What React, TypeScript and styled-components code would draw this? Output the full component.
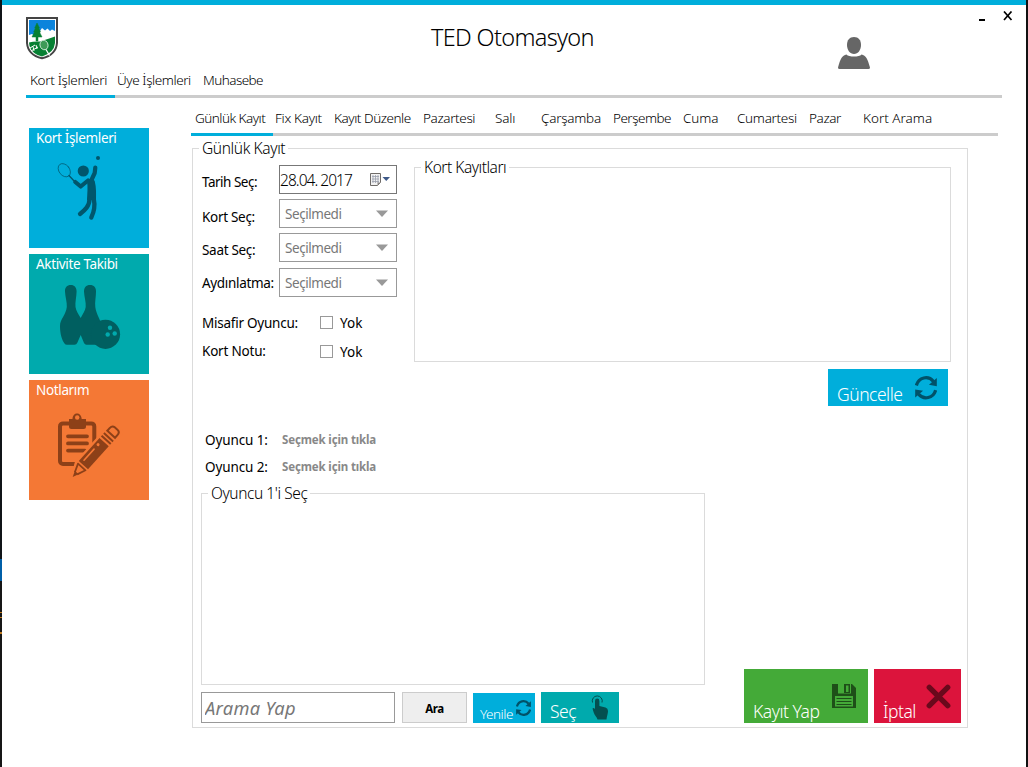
import React from "react";
import styled, { createGlobalStyle } from "styled-components";

const blue = "#00aedb";
const teal = "#00aaad";
const line = "#dbdbdb";

const GlobalStyle = createGlobalStyle`
  * { box-sizing: border-box; }
  body {
    margin: 0;
    overflow: hidden;
    background: #fff;
    color: #000;
    font-family: "Noto Sans", "Open Sans", sans-serif;
    font-size: 13.5px;
    line-height: 20px;
  }
  button, input { font: inherit; color: inherit; }
`;

const Desktop = styled.div`
  height: 767px;
  padding: 0 2px;
  background:
    linear-gradient(
      #101418 0 559px, #005fa8 559px 581px, #161616 581px 612px, #c07a20 612px 613px,
      #161616 613px 617px, #c07a20 617px 618px, #161616 618px 632px, #c07a20 632px 634px, #161616 634px
    ) left / 2px 100% no-repeat,
    #111;
`;

const Window = styled.div`
  display: flex;
  flex-direction: column;
  height: 100%;
  padding: 0 24px;
  border-top: 5px solid ${blue};
  background: #fff;
`;

const Header = styled.header`
  display: flex;
  height: 65px;
  margin-right: -11px;
`;

const Brand = styled.div`
  width: 405px;
  padding-top: 12px;
`;

const Title = styled.h1`
  width: 407px;
  margin: 0;
  padding-top: 17px;
  font-size: 23.5px;
  font-weight: 300;
  line-height: 31px;
  letter-spacing: -0.68px;
  white-space: nowrap;
`;

const Account = styled.div`
  flex: 1;
  padding-top: 32px;
`;

const WindowControls = styled.div`
  display: flex;
  align-items: flex-start;
  padding-top: 6px;
`;

const TabBar = styled.nav<{ $height: number }>`
  display: flex;
  align-items: stretch;
  height: ${(p) => p.$height}px;
  flex: none;
  border-bottom: 3px solid #ccc;
`;

const Tab = styled.a<{ $width: number; $space: number; $active?: boolean }>`
  flex: 0 0 ${(p) => p.$width + (p.$active ? 2 : 0)}px;
  padding-left: 4px;
  margin-right: ${(p) => (p.$active ? -2 : 0)}px;
  margin-bottom: -3px;
  border-bottom: 3px solid ${(p) => (p.$active ? blue : "transparent")};
  font-weight: 300;
  letter-spacing: ${(p) => p.$space}px;
  white-space: nowrap;
`;

const Body = styled.div`
  display: flex;
  flex: 1;
`;

const Sidebar = styled.aside`
  display: flex;
  flex-direction: column;
  gap: 6px;
  width: 165px;
  padding: 30px 0 0 3px;
`;

const Tile = styled.button<{ $color: string }>`
  display: grid;
  width: 120px;
  height: 120px;
  padding: 0;
  border: 0;
  background: ${(p) => p.$color};
  color: #fff;
  text-align: left;

  > * { grid-area: 1 / 1; }
`;

const TileLabel = styled.span`
  padding-left: 7px;
  letter-spacing: -0.35px;
`;

const Content = styled.main`
  width: 807px;
  padding-top: 10px;
`;

const Group = styled.section<{ $width: number; $height: number }>`
  position: relative;
  width: ${(p) => p.$width}px;
  height: ${(p) => p.$height}px;
  border: 1px solid ${line};
`;

const DayGroup = styled(Group)`
  margin: 12px 0 0 1px;
  padding: 16px 6px 4px 8px;
  display: flex;
  flex-direction: column;
`;

const Legend = styled.h2<{ $space: number }>`
  position: absolute;
  top: -12px;
  left: 6px;
  margin: 0;
  padding: 0 3px;
  background: #fff;
  font-size: 15.5px;
  font-weight: 300;
  line-height: 22px;
  letter-spacing: ${(p) => p.$space}px;
  white-space: nowrap;
`;

const Upper = styled.div`
  display: flex;
  height: 262px;
`;

const Form = styled.div`
  width: 213px;
  padding-left: 1px;
`;

const Field = styled.div<{ $height: number }>`
  display: flex;
  height: ${(p) => p.$height}px;
`;

const FieldLabel = styled.label<{ $drop: number; $space: number; $width?: number }>`
  width: ${(p) => p.$width ?? 77}px;
  padding-top: ${(p) => p.$drop}px;
  letter-spacing: ${(p) => p.$space}px;
  white-space: nowrap;
`;

const DateBox = styled.div`
  display: flex;
  align-items: center;
  width: 118px;
  height: 29px;
  padding-right: 5px;
  border: 1px solid #777;
  font-size: 15.5px;
  font-weight: 300;
  letter-spacing: -0.95px;
  line-height: 25px;

  > span { padding-top: 2px; }
  > svg { margin-left: auto; }
`;

const Year = styled.span`
  margin-left: 3px;
`;

const SelectBox = styled.div`
  display: flex;
  align-items: center;
  justify-content: space-between;
  width: 118px;
  height: 29px;
  padding: 0 8px 0 5px;
  border: 1px solid #999;
  color: #777;
  letter-spacing: -0.45px;
`;

const Options = styled.div`
  padding-top: 11px;
`;

const CheckLabel = styled.label<{ $drop: number }>`
  display: flex;
  align-items: center;
  gap: 7px;
  height: 20px;
  margin-top: ${(p) => p.$drop}px;
`;

const CheckBox = styled.span`
  width: 13px;
  height: 13px;
  margin-top: -1px;
  border: 1px solid #999;
`;

const Records = styled.div`
  display: flex;
  flex-direction: column;
  align-items: flex-end;
  gap: 7px;
  padding-top: 2px;
`;

const UpdateRow = styled.div`
  padding-right: 3px;
`;

const ActionTile = styled.button<{ $width: number; $height: number; $color: string; $pad: string }>`
  display: flex;
  justify-content: space-between;
  width: ${(p) => p.$width}px;
  height: ${(p) => p.$height}px;
  padding: ${(p) => p.$pad};
  border: 0;
  background: ${(p) => p.$color};
`;

const ActionText = styled.span<{ $small?: boolean }>`
  align-self: flex-end;
  color: #fff;
  font-size: ${(p) => (p.$small ? 13.5 : 17.5)}px;
  font-weight: 300;
  line-height: ${(p) => (p.$small ? 18 : 24)}px;
  letter-spacing: -0.48px;
  white-space: nowrap;
`;

const Players = styled.div`
  padding-left: 4px;
  line-height: 27px;
`;

const PlayerRow = styled.div`
  display: flex;
  height: 27px;
`;

const PlayerName = styled.span`
  width: 77px;
  letter-spacing: -0.1px;
`;

const PickLink = styled.a`
  color: #888;
  font-size: 11.5px;
  font-weight: 700;
  line-height: 25px;
  letter-spacing: -0.14px;
`;

const Lower = styled.div`
  display: flex;
  justify-content: space-between;
  align-items: flex-end;
  flex: 1;
`;

const SearchRow = styled.div`
  display: flex;
  align-items: flex-end;
  height: 31px;
  margin-top: 7px;
`;

const SearchInput = styled.input`
  width: 194px;
  height: 31px;
  margin-right: 7px;
  padding: 0 3px;
  border: 1px solid #999;
  outline: 0;
  font-size: 18.3px;
  font-style: italic;
  letter-spacing: 0.3px;

  &::placeholder { color: #777; opacity: 1; }
`;

const SearchButton = styled.button`
  width: 65px;
  height: 31px;
  margin-right: 6px;
  padding: 2px 0 0;
  border: 1px solid #ccc;
  background: #eee;
  font-size: 11.5px;
  font-weight: 700;
  letter-spacing: -0.4px;
`;

const PickSlot = styled.div`
  height: 31px;
  margin-left: 6px;
`;

const SubmitRow = styled.div`
  display: flex;
  gap: 6px;
`;

const Logo = () => (
  <svg width="32" height="43" viewBox="0 0 32 43" display="block">
    <path d="M1 1H31V26Q30 38 16 41.3Q2 38 1 26Z" fill="#fff" stroke="#444" strokeWidth="2" />
    <path d="M3 3H29V14L26 12.500L24 14L21.500 11.500L19 13.500L16 11L14 14V19H9L6 17L3 18Z" fill="#0b84dc" />
    <path d="M3 25.500Q8 24 14 24.500Q22 22 29 19.500V26Q28 36 16 39.500Q6 37 3.500 29Z" fill="#078033" />
    <path d="M11 6L13.500 11H12.700L14.500 15H13.500L16 20H12V24H10V20H6L8.500 15H7.700L9.500 11H8.700Z" fill="#078033" stroke="#078033" strokeWidth=".5" />
    <ellipse cx="18" cy="28" rx="4" ry="4.800" transform="rotate(-15 18 28)" fill="#3d9a57" stroke="#e4f2e8" strokeWidth=".8" />
    <path d="M20 32.500L23.500 38.500" stroke="#fff" strokeWidth="1.300" />
    <path d="M4 31L9 28M5 34L12 30M8 34L7 29.500M11 32L10 28" stroke="#fff" strokeWidth="1" />
  </svg>
);

const UserIcon = () => (
  <svg width="32" height="32" viewBox="0 0 32 32" fill="#666" display="block">
    <path d="M16 0C20.500 0 23 3.200 23 8C23 13 20 17 16 17S9 13 9 8C9 3.200 11.500 0 16 0Z" />
    <path d="M8.500 17.500C10.500 20.300 21.500 20.300 23.500 17.500C28 18.500 29.500 21.500 32 30.500Q32 32 30.500 32H1.500Q0 32 0 30.500C2.500 21.500 4 18.500 8.500 17.500Z" />
  </svg>
);

const ControlIcons = () => (
  <svg width="34" height="10" viewBox="0 0 34 10" fill="none" stroke="#000">
    <path d="M0 9H6" strokeWidth="2" />
    <path d="M25 .5L32.500 9M32.500 .5L25 9" strokeWidth="1.700" />
  </svg>
);

const TennisIcon = () => (
  <svg width="120" height="120" viewBox="0 0 120 120" fill="none" stroke="#00566c" strokeLinecap="round" strokeLinejoin="round">
    <ellipse cx="35.300" cy="42.200" rx="5.300" ry="7.300" transform="rotate(-38 35.300 42.200)" strokeWidth=".7" />
    <path d="M40 47.500L46 54" strokeWidth="1.300" />
    <circle cx="69" cy="30" r="2" fill="#00566c" stroke="none" />
    <circle cx="54.300" cy="43" r="5.600" fill="#00566c" stroke="none" />
    <path d="M66.300 39.500L65.700 45L62 53M46.300 54L51.700 58.500L59 52.500" strokeWidth="4.200" />
    <path d="M58 53C59.500 50 64 50 65.700 53C67.500 60 67 66 67 72H58C58.300 65 59 59 58 53Z" fill="#00566c" stroke="none" />
    <path d="M60.500 71C60.500 78 56 82 51 86M64.800 71C66.500 79 65 84 62.300 89.500" strokeWidth="4.300" />
  </svg>
);

const BowlingIcon = () => (
  <svg width="120" height="120" viewBox="0 0 120 120" fill="#005f60">
    <path d="M41.800 31C38 31 35.800 33.500 36 37.500C36.200 43 38.200 48 37.800 53C37 61 31 65 31 72C31 80 33 86 35.500 89.500Q36.300 90.700 38 90.700H45.500Q47.500 90.700 48.200 89L51.700 81L55 89Q55.800 90.700 57.500 90.700H67C69.500 89 72 81 72 72C72 65 67.200 61 66.300 53C65.700 48 67 43 67 37.500C67 33.500 65 31 61 31S55 33.500 55 37.500C55.200 43 57.200 48 56.700 53C56.300 57 53.500 60 51.700 64C49.500 60 47 57 46.500 53C46 48 47.500 43 47.600 37.500C47.600 33.500 45.500 31 41.800 31Z" />
    <circle cx="76.500" cy="80.300" r="14.600" />
    <g fill={teal}>
      <circle cx="81" cy="73.700" r="2.200" />
      <circle cx="78.700" cy="80.500" r="2.200" />
      <circle cx="85.700" cy="79.500" r="2.200" />
    </g>
  </svg>
);

const NotesIcon = () => (
  <svg width="120" height="120" viewBox="0 0 120 120" fill="none" stroke="#8d4018">
    <rect x="31" y="43.400" width="34.300" height="40.500" rx="3" strokeWidth="4" />
    <path d="M39 56.300H58M39 63.400H58M39 70.600H56" strokeWidth="3.800" strokeLinecap="round" />
    <path d="M40 39H43.500C43.500 31.500 52.500 31.500 52.700 39H57V46.500Q57 49 54.500 49H42.500Q40 49 40 46.500Z" fill="#8d4018" stroke="none" />
    <circle cx="48.200" cy="37.500" r="2.200" fill="#f47835" stroke="none" />
    <g transform="translate(43.700 97) rotate(-48)">
      <path d="M-2 0L13 -7.500H63Q68 -7.500 68 -3V3Q68 7.500 63 7.500H13Z" fill="#f47835" stroke="#f47835" strokeWidth="2" />
      <path d="M5 -1.600L13.500 -5V5L5 1.600" strokeWidth="1.800" strokeLinejoin="round" />
      <path d="M0 0L6 -2.500V2.500Z" fill="#8d4018" stroke="none" />
      <path d="M16 -6.200H47V6.200H16Z" fill="#8d4018" stroke="none" />
      <path d="M20 -2.800H35" stroke="#f47835" strokeWidth="1.600" strokeLinecap="round" />
      <circle cx="41" cy="-2.800" r="1.500" fill="#f47835" stroke="none" />
      <path d="M50 -6.200V6.200M53.500 -6.200V6.200" strokeWidth="2" />
      <path d="M57.500 -5.200H61Q65 -5.200 65 -2V2Q65 5.200 61 5.200H57.500Z" strokeWidth="2" />
    </g>
  </svg>
);

const RefreshIcon = ({ size }: { size: number }) => (
  <svg width={size} height={size * 1.07} viewBox="0 0 66 72" fill="none" stroke="#005269" strokeWidth="10">
    <path d="M3.500 29C10 4 40 -3 56 17" />
    <path d="M66 6V31L42 27Z" fill="#005269" stroke="none" />
    <path d="M62.500 43C56 68 26 75 10 55" />
    <path d="M0 66V41L24 45Z" fill="#005269" stroke="none" />
  </svg>
);

const TapIcon = () => (
  <svg width="18" height="25" viewBox="0 0 18 25" fill="none" stroke="#044f50">
    <path d="M1.500 7.500A5 5 0 1 1 11 7.500" strokeWidth="1" />
    <path d="M4 7.500V6Q4 3.600 6.200 3.600T8.400 6V11L14.500 12.500Q17 13.300 17 16C17 18.500 16 20.500 15.500 24.500H6.500C6 22 3.500 20.500 2.700 17.500L1.500 13.500Q2.500 12.500 4 14Z" fill="#044f50" stroke="none" />
  </svg>
);

const SaveIcon = () => (
  <svg width="24" height="24" viewBox="0 0 24 24" fill="#1e4f18">
    <path fillRule="evenodd" d="M0 0H6V9.500H19V0H20L24 4V24H0ZM3 12V22.500H21V12Z" />
    <path fillRule="evenodd" d="M12 0H18V9H12ZM14 1.500V8H16.500V1.500Z" />
    <path d="M4.500 14H19.500V15H4.500ZM4.500 17H19.500V18H4.500ZM4.500 20H19.500V21H4.500Z" />
  </svg>
);

const CancelIcon = () => (
  <svg width="25" height="25" viewBox="0 0 25 25" fill="none" stroke="#6a091c" strokeWidth="5.400" strokeLinecap="round">
    <path d="M3.300 3.300L21.700 21.700M21.700 3.300L3.300 21.700" />
  </svg>
);

const CalendarIcon = () => (
  <svg width="22" height="15" viewBox="0 0 22 15">
    <path d="M1.500 1.500H11.500V10.500L8.500 13.500H1.500Z" fill="#f2f2f2" stroke="#6f6b68" />
    <path d="M3 4.500H10M3 7H10M3 9.500H10M4 3V11M6.500 3V11M9 3V11" stroke="#9aa0ac" strokeWidth=".8" />
    <path d="M8.500 13.500V10.500H11.500Z" fill="#8a8683" />
    <path d="M13.500 5H21L17.250 9Z" fill="#3f5a88" />
  </svg>
);

const ArrowIcon = () => (
  <svg width="12" height="7" viewBox="0 0 12 7" fill="#999">
    <path d="M0 .5H12L6 7Z" />
  </svg>
);

const mainTabs = [
  { text: "Kort İşlemleri", width: 87, space: -0.33, active: true },
  { text: "Üye İşlemleri", width: 86, space: -0.42 },
  { text: "Muhasebe", width: 80, space: -0.55 },
];

const dayTabs = [
  { text: "Günlük Kayıt", width: 80, space: -0.52, active: true },
  { text: "Fix Kayıt", width: 59, space: -0.3 },
  { text: "Kayıt Düzenle", width: 89, space: -0.46 },
  { text: "Pazartesi", width: 72, space: -0.38 },
  { text: "Salı", width: 46, space: -0.2 },
  { text: "Çarşamba", width: 72, space: -0.25 },
  { text: "Perşembe", width: 70, space: -0.52 },
  { text: "Cuma", width: 54, space: -0.1 },
  { text: "Cumartesi", width: 72, space: -0.3 },
  { text: "Pazar", width: 54, space: -0.4 },
  { text: "Kort Arama", width: 80, space: 0 },
];

const selects = [
  { text: "Kort Seç:", height: 34, drop: 8, space: -0.3 },
  { text: "Saat Seç:", height: 35, drop: 7, space: -0.3 },
  { text: "Aydınlatma:", height: 29, drop: 5, space: -0.32 },
];

export default function App() {
  return (
    <Desktop>
      <GlobalStyle />
      <Window>
        <Header>
          <Brand><Logo /></Brand>
          <Title>TED Otomasyon</Title>
          <Account><UserIcon /></Account>
          <WindowControls><ControlIcons /></WindowControls>
        </Header>
        <TabBar $height={28}>
          {mainTabs.map((t) => (
            <Tab key={t.text} $width={t.width} $space={t.space} $active={t.active}>{t.text}</Tab>
          ))}
        </TabBar>
        <Body>
          <Sidebar>
            <Tile $color={blue}><TennisIcon /><TileLabel>Kort İşlemleri</TileLabel></Tile>
            <Tile $color={teal}><BowlingIcon /><TileLabel>Aktivite Takibi</TileLabel></Tile>
            <Tile $color="#f47835"><NotesIcon /><TileLabel>Notlarım</TileLabel></Tile>
          </Sidebar>
          <Content>
            <TabBar $height={28}>
              {dayTabs.map((t) => (
                <Tab key={t.text} $width={t.width} $space={t.space} $active={t.active}>{t.text}</Tab>
              ))}
            </TabBar>
            <DayGroup $width={776} $height={580}>
              <Legend $space={-0.38}>Günlük Kayıt</Legend>
              <Upper>
                <Form>
                  <Field $height={34}>
                    <FieldLabel $drop={7} $space={-0.5}>Tarih Seç:</FieldLabel>
                    <DateBox>
                      <span>28.04.</span>
                      <Year>2017</Year>
                      <CalendarIcon />
                    </DateBox>
                  </Field>
                  {selects.map((s) => (
                    <Field key={s.text} $height={s.height}>
                      <FieldLabel $drop={s.drop} $space={s.space}>{s.text}</FieldLabel>
                      <SelectBox>Seçilmedi<ArrowIcon /></SelectBox>
                    </Field>
                  ))}
                  <Options>
                    <Field $height={28}>
                      <FieldLabel $width={118} $drop={5} $space={-0.24}>Misafir Oyuncu:</FieldLabel>
                      <CheckLabel $drop={5}><CheckBox />Yok</CheckLabel>
                    </Field>
                    <Field $height={28}>
                      <FieldLabel $width={118} $drop={5} $space={-0.2}>Kort Notu:</FieldLabel>
                      <CheckLabel $drop={6}><CheckBox />Yok</CheckLabel>
                    </Field>
                  </Options>
                </Form>
                <Records>
                  <Group $width={537} $height={195}>
                    <Legend $space={-0.48}>Kort Kayıtları</Legend>
                  </Group>
                  <UpdateRow>
                    <ActionTile $width={120} $height={37} $color={blue} $pad="7px 11px 0 9px">
                      <ActionText>Güncelle</ActionText>
                      <RefreshIcon size={22} />
                    </ActionTile>
                  </UpdateRow>
                </Records>
              </Upper>
              <Players>
                <PlayerRow><PlayerName>Oyuncu 1:</PlayerName><PickLink>Seçmek için tıkla</PickLink></PlayerRow>
                <PlayerRow><PlayerName>Oyuncu 2:</PlayerName><PickLink>Seçmek için tıkla</PickLink></PlayerRow>
              </Players>
              <Lower>
                <div>
                  <Group $width={504} $height={192}>
                    <Legend $space={-0.42}>Oyuncu 1'i Seç</Legend>
                  </Group>
                  <SearchRow>
                    <SearchInput placeholder="Arama Yap" />
                    <SearchButton>Ara</SearchButton>
                    <ActionTile $width={62} $height={30} $color={blue} $pad="7px 4px 0 7px">
                      <ActionText $small>Yenile</ActionText>
                      <RefreshIcon size={15} />
                    </ActionTile>
                    <PickSlot>
                      <ActionTile $width={78} $height={31} $color={teal} $pad="3px 10px 0 9px">
                        <ActionText>Seç</ActionText>
                        <TapIcon />
                      </ActionTile>
                    </PickSlot>
                  </SearchRow>
                </div>
                <SubmitRow>
                  <ActionTile $width={124} $height={54} $color="#44aa38" $pad="15px 12px 0 9px">
                    <ActionText>Kayıt Yap</ActionText>
                    <SaveIcon />
                  </ActionTile>
                  <ActionTile $width={87} $height={54} $color="#dc143c" $pad="15px 10px 0 9px">
                    <ActionText>İptal</ActionText>
                    <CancelIcon />
                  </ActionTile>
                </SubmitRow>
              </Lower>
            </DayGroup>
          </Content>
        </Body>
      </Window>
    </Desktop>
  );
}
